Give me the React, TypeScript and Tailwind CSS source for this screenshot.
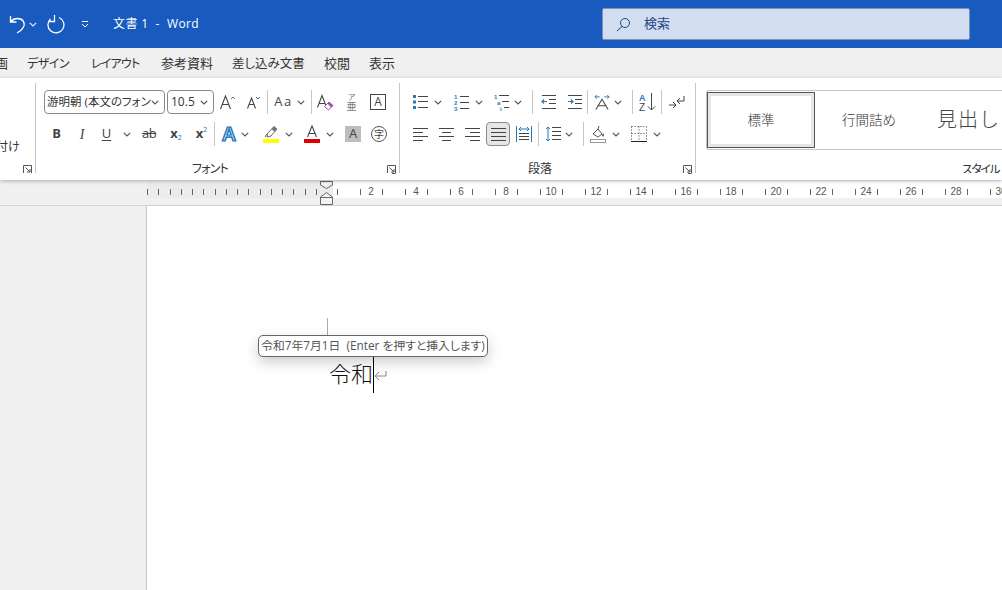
import React from "react";

const FONT = "font-['Open_Sans','Noto_Sans_CJK_JP',sans-serif]";
const Chev = ({ c = "#555", cls = "" }: { c?: string; cls?: string }) => (
  <svg width="8" height="5" viewBox="0 0 8 5" className={cls}><path d="M.8.8 4 4l3.2-3.2" fill="none" stroke={c} strokeWidth="1.2" /></svg>
);
const Cell = ({ cls, children }: { cls: string; children?: React.ReactNode }) => (
  <div className={`flex h-6 shrink-0 items-center justify-center ${cls}`}>{children}</div>
);
const Sep = ({ cls = "" }: { cls?: string }) => <div className={`h-6 w-px shrink-0 bg-[#c6c6c6] ${cls}`} />;
const Launcher = () => (
  <svg width="9" height="9" viewBox="0 0 9 9" className="shrink-0">
    <path d="M.5 8V.5H8.500V8.500H5M2.500 2.500 7 7M7 4v3H4" fill="none" stroke="#555" />
  </svg>
);
const Lines = ({ xs }: { xs: [number, number, number][] }) => (
  <svg width="15" height="14" viewBox="0 0 15 14">
    {xs.map(([a, b, y], i) => <path key={i} d={`M${a} ${y + 0.5}H${b}`} stroke="#444" />)}
  </svg>
);
const Bullets = () => (
  <svg width="16" height="16" viewBox="0 0 16 16">
    {[1, 6.5, 12].map(y => <g key={y}><rect x="0" y={y} width="3" height="3" fill="#2b79b5" /><path d={`M5 ${Math.floor(y + 1) + 0.5}H15`} stroke="#444" /></g>)}
  </svg>
);
const Numbers = () => (
  <svg width="16" height="18" viewBox="0 0 16 18">
    {["1", "2", "3"].map((t, i) => <g key={t}><text x="0" y={5.500 + i * 6} fontSize="6" fontWeight="700" fill="#2b79b5" fontFamily="Liberation Sans">{t}</text><path d={`M6 ${3.500 + i * 6}H15`} stroke="#444" /></g>)}
  </svg>
);
const Multi = () => (
  <svg width="17" height="18" viewBox="0 0 17 18">
    <text x="0" y="5.500" fontSize="6" fontWeight="700" fill="#2b79b5" fontFamily="Liberation Sans">1</text>
    <text x="3" y="11.500" fontSize="6" fontWeight="700" fill="#2b79b5" fontFamily="Liberation Sans">a</text>
    <text x="6" y="17.500" fontSize="6" fontWeight="700" fill="#2b79b5" fontFamily="Liberation Sans">i</text>
    <path d="M5 2.500H15M8 8.500H15M10 14.500H15" stroke="#444" />
  </svg>
);
const Indent = ({ flip }: { flip?: boolean }) => (
  <svg width="15" height="14" viewBox="0 0 15 14">
    <path d="M1 .5H15M8 4.500H15M8 8.500H15M1 13.500H15" stroke="#444" />
    <path d={flip ? "M1 6.500H6M4 4.500l2 2-2 2" : "M1 6.500H6M3 4.500l-2 2 2 2"} fill="none" stroke="#2b79b5" strokeWidth="1.2" />
  </svg>
);

const Row1Font = () => (
  <div className="flex h-6 items-center pl-2">
    <div className="flex h-6 w-[121px] shrink-0 items-center justify-between rounded-[4px] border border-[#8a8a8a] pl-[2px] pr-[5px] text-[11.500px] text-[#333] [font-feature-settings:'palt']">
      <span className="whitespace-pre">游明朝 (本文のフォン</span><Chev />
    </div>
    <div className="ml-[2px] flex h-6 w-[47px] shrink-0 items-center justify-between rounded-[4px] border border-[#8a8a8a] pl-[3px] pr-[5px] text-[12px] text-[#333]">
      <span>10.5</span><Chev />
    </div>
    <Cell cls="w-[27px]">
      <svg width="16" height="15" viewBox="0 0 16 15"><path d="M.5 14 5.500 1 10.500 14M2.500 9.500H8.500" fill="none" stroke="#444" strokeWidth="1.1" /><path d="M11 4l2-2 2 2" fill="none" stroke="#2b79b5" /></svg>
    </Cell>
    <Cell cls="w-[26px]">
      <svg width="14" height="13" viewBox="0 0 14 13"><path d="M.5 12.500 4.500 2 8.500 12.500M2 8.500H7" fill="none" stroke="#444" strokeWidth="1.1" /><path d="M9 1l2 2 2-2" fill="none" stroke="#2b79b5" /></svg>
    </Cell>
    <Sep />
    <Cell cls="w-[43px] gap-[4px] text-[13px] text-[#444]"><span className="tracking-[1.5px]">Aa</span><Chev /></Cell>
    <Sep />
    <Cell cls="w-[26px]">
      <svg width="17" height="17" viewBox="0 0 17 17"><path d="M.5 13.500 5 1.500 9 12M2 9.500H7.500" fill="none" stroke="#444" strokeWidth="1.1" /><path d="M7.500 12.500 12 8l4 3.500L11.500 16z" fill="#fff" stroke="#a04fac" /><path d="M10.500 9.500 12 8l4 3.500-2 2z" fill="#a04fac" /></svg>
    </Cell>
    <Cell cls="w-[27px] flex-col text-[#777]">
      <span className="text-[8px] leading-[8px]">ア</span><span className="text-[10px] leading-[10px]">亜</span>
    </Cell>
    <Cell cls="w-[26px]">
      <div className="flex h-[16px] w-[16px] items-center justify-center border border-[#444] text-[12px] leading-none text-[#444]">A</div>
    </Cell>
  </div>
);

const Row2Font = () => (
  <div className="mt-2 flex h-6 items-center pl-2 text-[#444]">
    <Cell cls="w-[25px] text-[13px] font-bold">B</Cell>
    <Cell cls="w-[26px] font-['Liberation_Serif',serif] text-[14px] italic">I</Cell>
    <Cell cls="w-[23px] text-[13px]"><span className="underline underline-offset-2">U</span></Cell>
    <Cell cls="w-[17px]"><Chev /></Cell>
    <Cell cls="w-[28px]"><span className="text-[13px] line-through tracking-[-0.5px]">ab</span></Cell>
    <Cell cls="w-[26px] text-[13px] font-bold"><span>x</span><span className="mt-2 text-[7px] font-normal text-[#2b79b5]">2</span></Cell>
    <Cell cls="w-[25px] text-[13px] font-bold"><span>x</span><span className="-mt-2 text-[7px] font-normal text-[#2b79b5]">2</span></Cell>
    <Sep />
    <Cell cls="ml-[6px] w-4">
      <span className="font-['Liberation_Sans',sans-serif] text-[20px] font-bold text-[#9fd0f5] [-webkit-text-stroke:1.200px_#1a6fb5]">A</span>
    </Cell>
    <Cell cls="w-4"><Chev /></Cell>
    <Cell cls="ml-[10px] w-4">
      <svg width="16" height="20" viewBox="0 0 16 20"><path d="M4 13 4.500 9.500 11 2.500 14 5 8 12z" fill="#fff" stroke="#666" /><path d="M8.500 5 11 2.500 14 5 11.500 8z" fill="#777" /><path d="M4 10l-2 3" stroke="#666" /><rect y="15" width="16" height="4" fill="#ffff00" /></svg>
    </Cell>
    <Cell cls="ml-[2px] w-4"><Chev /></Cell>
    <Cell cls="ml-[7px] w-4">
      <svg width="16" height="20" viewBox="0 0 16 20"><path d="M3.500 13 8 2l4.500 11M5 9.500h6" fill="none" stroke="#444" strokeWidth="1.1" /><rect y="15" width="16" height="4" fill="#e00000" /></svg>
    </Cell>
    <Cell cls="ml-[2px] w-4"><Chev /></Cell>
    <Cell cls="ml-[7px] w-4"><div className="flex h-4 w-4 items-center justify-center bg-[#bdbdbd] text-[13px]">A</div></Cell>
    <Cell cls="ml-[10px] w-4">
      <div className="flex h-4 w-4 items-center justify-center rounded-full border border-[#555] text-[10px] leading-none">字</div>
    </Cell>
  </div>
);

const ParaRow1 = () => (
  <div className="flex h-6 items-center pl-[12px]">
    <Cell cls="w-[17px]"><Bullets /></Cell>
    <Cell cls="ml-[3px] w-[12px]"><Chev /></Cell>
    <Cell cls="ml-[9px] w-[17px]"><Numbers /></Cell>
    <Cell cls="ml-[3px] w-[12px]"><Chev /></Cell>
    <Cell cls="ml-[9px] w-[17px]"><Multi /></Cell>
    <Cell cls="ml-px w-[12px]"><Chev /></Cell>
    <Sep cls="ml-[8px]" />
    <Cell cls="ml-[7px] w-4"><Indent /></Cell>
    <Cell cls="ml-[10px] w-4"><Indent flip /></Cell>
    <Sep cls="ml-[5px]" />
    <Cell cls="ml-[6px] w-4">
      <svg width="17" height="17" viewBox="0 0 17 17"><path d="M1 2.500H6M3 .5l-2 2 2 2M11 2.500h5M14 .5l2 2-2 2" fill="none" stroke="#2b79b5" /><path d="M2 16 8.500 5 15 16M5 12h7" fill="none" stroke="#444" strokeWidth="1.1" /></svg>
    </Cell>
    <Cell cls="ml-[2px] w-[12px]"><Chev /></Cell>
    <Sep cls="ml-[8px]" />
    <Cell cls="ml-[6px] w-[17px]">
      <svg width="17" height="20" viewBox="0 0 17 20"><text x="0" y="9" fontSize="9" fontWeight="700" fill="#2b79b5" fontFamily="Liberation Sans">A</text><text x="0" y="19" fontSize="10" fill="#444" fontFamily="Liberation Sans">Z</text><path d="M12.500 1V18M9 14.500l3.500 3.500 3.500-3.500" fill="none" stroke="#444" /></svg>
    </Cell>
    <Sep cls="ml-[5px]" />
    <Cell cls="ml-[6px] w-[17px]">
      <svg width="17" height="15" viewBox="0 0 17 15"><path d="M16 1V6H9M12 3 9 6l3 3" fill="none" stroke="#444" /><path d="M1 10H8M5 7l3 3-3 3" fill="none" stroke="#444" /></svg>
    </Cell>
  </div>
);

const ParaRow2 = () => (
  <div className="mt-2 flex h-6 items-center pl-[13px]">
    <Cell cls="w-[15px]"><Lines xs={[[0, 15, 1], [0, 10, 5], [0, 15, 9], [0, 10, 13]]} /></Cell>
    <Cell cls="ml-[11px] w-[15px]"><Lines xs={[[0, 15, 1], [3, 12, 5], [0, 15, 9], [3, 12, 13]]} /></Cell>
    <Cell cls="ml-[11px] w-[15px]"><Lines xs={[[0, 15, 1], [5, 15, 5], [0, 15, 9], [5, 15, 13]]} /></Cell>
    <div className="ml-[6px] flex h-6 w-6 shrink-0 items-center justify-center rounded-[4px] border border-[#8a8a8a] bg-[#e6e6e6]"><Lines xs={[[0, 15, 1], [0, 15, 5], [0, 15, 9], [0, 15, 13]]} /></div>
    <Cell cls="ml-[6px] w-[16px]">
      <svg width="16" height="16" viewBox="0 0 16 16"><path d="M.5 0V16M15.500 0V16" stroke="#2b79b5" /><path d="M3 3h10M5 1 3 3l2 2M11 1l2 2-2 2" fill="none" stroke="#2b79b5" /><path d="M3 7.500H13M3 10.500H13M3 13.500H13" stroke="#444" /></svg>
    </Cell>
    <Sep cls="ml-[6px]" />
    <Cell cls="ml-[6px] w-[16px]">
      <svg width="16" height="16" viewBox="0 0 16 16"><path d="M3 1V15M1 3l2-2 2 2M1 13l2 2 2-2" fill="none" stroke="#2b79b5" /><path d="M7 1.500H16M7 5.500H16M7 9.500H16M7 13.500H16" stroke="#444" /></svg>
    </Cell>
    <Cell cls="w-[16px]"><Chev /></Cell>
    <Sep cls="ml-[6px]" />
    <Cell cls="ml-[6px] w-[16px]">
      <svg width="16" height="18" viewBox="0 0 16 18"><path d="M3 9 8 4l4 5-4 3z" fill="none" stroke="#555" /><path d="M8 4 9 1" stroke="#555" /><path d="M13 8c1.500 2 1.500 3.500 0 3.500S11.500 10 13 8" fill="#2b79b5" /><rect x=".5" y="14.500" width="15" height="3" fill="#fff" stroke="#999" /></svg>
    </Cell>
    <Cell cls="ml-[2px] w-[16px]"><Chev /></Cell>
    <Cell cls="ml-[7px] w-[16px]">
      <svg width="16" height="16" viewBox="0 0 16 16"><path d="M.5 .5H15.500V14M.5 .5V14M.5 7.500H15.500M8 .5V15" fill="none" stroke="#333" strokeDasharray="1 2" /><path d="M0 15.500H16" stroke="#222" /></svg>
    </Cell>
    <Cell cls="ml-[2px] w-[16px]"><Chev /></Cell>
  </div>
);

const LeftTicks = Array.from({ length: 16 });
const RightTicks = Array.from({ length: 30 });

export default function App() {
  return (
    <div className={`relative h-[590px] w-[1002px] overflow-hidden bg-[#f0f0f0] ${FONT}`}>
      {/* Title bar */}
      <div className="flex h-12 items-center bg-[#185abd] text-white">
        <svg width="17" height="19" viewBox="0 0 17 19" className="ml-[9px]">
          <path d="M1.500 1V7H7.500M2 6.500C5 2.500 12 2.500 14.500 6.500c2 4-1 8.500-6.500 11.500" fill="none" stroke="#fff" strokeWidth="1.4" />
        </svg>
        <Chev c="#dfe8f6" cls="ml-[3px]" />
        <svg width="18" height="20" viewBox="0 0 18 20" className="ml-[10px]">
          <path d="M7.500 1V7.500H2M3.500 5A8 8 0 1 0 12 3.500" fill="none" stroke="#fff" strokeWidth="1.3" />
        </svg>
        <svg width="8" height="8" viewBox="0 0 8 8" className="ml-[16px]">
          <path d="M1 1.500H7M1 4l3 3 3-3" fill="none" stroke="#fff" />
        </svg>
        <span className="ml-6 w-[87px] shrink-0 whitespace-pre text-[12px] tracking-[0.4px]">文書 1  -  Word</span>
        <div className="ml-[402px] flex h-8 w-[368px] shrink-0 items-center rounded-[2px] border border-[#7b93b8] bg-[#d2deef] pl-[13px] text-[13px] text-[#1c4587]">
          <svg width="15" height="15" viewBox="0 0 15 15"><circle cx="9" cy="6" r="4.500" fill="none" stroke="#1c4587" /><path d="M6 9.500 1 14" stroke="#1c4587" /></svg>
          <span className="ml-[13px]">検索</span>
        </div>
      </div>

      {/* Tabs */}
      <div className="flex h-[30px] items-center overflow-hidden bg-[#f0f0f0] pt-[2px] text-[#333] [font-feature-settings:'palt']">
        <span className="-ml-[5px] w-[13px] shrink-0 text-[13px]">画</span>
        <span className="ml-[19px] w-[43px] shrink-0 whitespace-nowrap text-[12px] tracking-[-0.5px]">デザイン</span>
        <span className="ml-[21px] w-[49px] shrink-0 whitespace-nowrap text-[12px] tracking-[-0.8px]">レイアウト</span>
        <span className="ml-[21px] w-[52px] shrink-0 whitespace-nowrap text-[13px]">参考資料</span>
        <span className="ml-[19px] w-[73px] shrink-0 whitespace-nowrap text-[12.500px]">差し込み文書</span>
        <span className="ml-[19px] w-[26px] shrink-0 whitespace-nowrap text-[13px]">校閲</span>
        <span className="ml-[19px] w-[26px] shrink-0 whitespace-nowrap text-[13px]">表示</span>
      </div>

      {/* Ribbon */}
      <div className="relative z-10 flex h-[102px] items-start overflow-hidden bg-white pt-[5px] shadow-[0_1px_4px_rgba(0,0,0,0.28)]">
        <div className="flex h-[90px] w-9 shrink-0 flex-col items-end overflow-hidden border-r border-[#c6c6c6] pr-[3px]">
          <span className="mt-[57px] w-full whitespace-nowrap pr-[13px] text-right text-[12px] leading-[14px] text-[#333]"><span className="-mr-[4px] inline-block translate-x-[-4px]">付け</span></span>
          <div className="mt-[11px]"><Launcher /></div>
        </div>

        <div className="flex h-[90px] w-[364px] shrink-0 flex-col border-r border-[#c6c6c6] pt-[7px]">
          <Row1Font />
          <Row2Font />
          <div className="mt-[16px] flex items-center justify-end pr-[3px]">
            <span className="mr-[159px] text-[12px] leading-[14px] tracking-[-0.8px] text-[#333] [font-feature-settings:'palt']">フォント</span>
            <Launcher />
          </div>
        </div>

        <div className="flex h-[90px] w-[296px] shrink-0 flex-col border-r border-[#c6c6c6] pt-[7px]">
          <ParaRow1 />
          <ParaRow2 />
          <div className="mt-[16px] flex items-center justify-end pr-[3px]">
            <span className="mr-[131px] text-[12px] leading-[14px] text-[#333]">段落</span>
            <Launcher />
          </div>
        </div>

        <div className="flex h-[90px] flex-1 flex-col overflow-hidden pl-[10px] pt-[7px]">
          <div className="flex h-[60px] w-[400px] shrink-0 items-center rounded-[2px] border border-[#c6c6c6]">
            <div className="flex h-[56px] w-[108px] shrink-0 items-center justify-center border border-[#555] text-[13.500px] font-light text-[#333] shadow-[inset_0_0_0_3px_#e6e6e6]">標準</div>
            <div className="flex w-[108px] shrink-0 justify-center text-[13.500px] font-light text-[#333]">行間詰め</div>
            <div className="w-[100px] shrink-0 pl-[14px] text-[20px] tracking-[1px] text-[#444] whitespace-nowrap font-light">見出し</div>
          </div>
          <div className="mt-[13px] flex justify-end pr-[3px] text-[12px] leading-[14px] tracking-[-1.500px] text-[#333] [font-feature-settings:'palt']">スタイル</div>
        </div>
      </div>

      {/* Ruler */}
      <div className="relative flex h-[26px] items-start border-b border-[#d2d2d2] bg-[#f0f0f0] pl-[147px] pt-px">
        <div className="flex h-[17px] w-[186px] shrink-0 items-center bg-[#ececec] pt-[5px]">
          {LeftTicks.map((_, i) => (
            <div key={i} className="h-[6px] w-[11.250px] shrink-0 border-l border-[#666]" />
          ))}
        </div>
        <div className="flex h-[17px] flex-1 items-center overflow-hidden bg-white pl-[4.250px] pt-[5px]">
          {RightTicks.map((_, i) => (
            <div key={i} className="flex h-3 w-[22.500px] shrink-0 items-center">
              <div className="h-[6px] w-px shrink-0 bg-[#666]" />
              <span className="flex-1 pr-px text-center font-['Liberation_Sans',sans-serif] text-[10px] leading-none text-[#555]">
                {(i + 1) % 2 === 0 ? i + 1 : ""}
              </span>
            </div>
          ))}
        </div>
        <svg width="13" height="25" viewBox="0 0 13 25" className="absolute left-[320px] top-0">
          <path d="M.5 1.500H12.500V5L6.500 8.500.5 5z M.5 17 6.500 12.500 12.500 17V24.500H.5z M.5 17.500H12.500" fill="#f4f4f4" stroke="#666" />
        </svg>
      </div>

      {/* Document */}
      <div className="relative ml-[146px] h-[384px] border-l border-[#c6c6c6] bg-white pl-[182px] pt-[151px]">
        <div className="font-['Noto_Sans_CJK_JP',serif] text-[22px] font-light leading-[30px] text-[#111]">令和</div>
        <div className="absolute left-[180px] top-[112px] h-[17px] w-px bg-[#aaa]" />
        <div className="absolute left-[226px] top-[151px] h-9 w-px bg-black" />
        <svg width="13" height="11" viewBox="0 0 13 11" className="absolute left-[227px] top-[164px]">
          <path d="M12 1V6H1M5 2 1 6l4 4" fill="none" stroke="#888" />
        </svg>
        <div className="absolute left-[111px] top-[129px] flex h-[22px] w-[230px] items-center justify-center whitespace-pre rounded-[5px] border border-[#666] bg-white text-[11.800px] text-[#555] shadow-[0_5px_14px_rgba(0,0,0,0.2)] [font-feature-settings:'palt']">
          令和7年7月1日  (Enter を押すと挿入します)
        </div>
      </div>
    </div>
  );
}
